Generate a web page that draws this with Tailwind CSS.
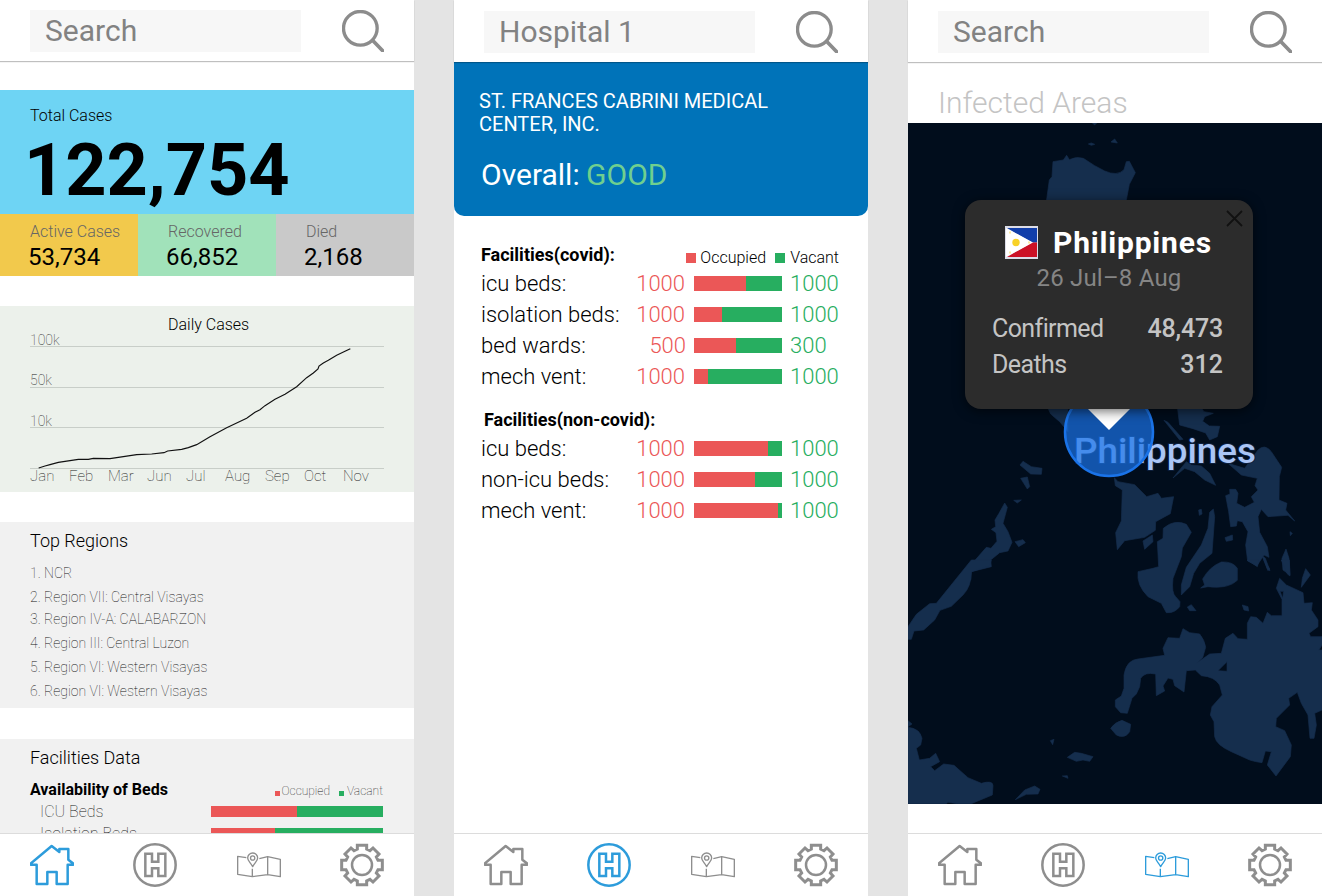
<!DOCTYPE html>
<html lang="en">
<head>
<meta charset="utf-8">
<title>Covid Tracker</title>
<script src="https://cdn.jsdelivr.net/npm/@tailwindcss/browser@4"></script>
</head>
<body class="bg-[#e4e4e4] font-['Roboto',sans-serif] text-black">
<svg class="hidden">
  <symbol id="search" viewBox="0 0 126 126"><g fill="none" stroke="currentColor" stroke-width="10"><circle cx="55" cy="55" r="50.5"/><path d="M93 92 122 122" stroke-width="11" stroke-linecap="round"/></g></symbol>
  <symbol id="home" viewBox="90 24 132 132"><path d="M155 33 92 86V89H110V147H142V111H170V147H203V89H220V86L205 74V42H178V51Z" fill="none" stroke="currentColor" stroke-width="7.5" stroke-linejoin="round"/></symbol>
  <symbol id="hospital" viewBox="399 24 132 132"><g fill="none" stroke="currentColor" stroke-width="7.5"><circle cx="465" cy="90" r="62"/><path d="M436 56H456V80H475V56H496V123H475V100H456V123H436Z"/></g></symbol>
  <symbol id="map" viewBox="80 24 132 132"><g fill="none" stroke="currentColor" stroke-width="4" stroke-linejoin="round"><path d="M108 68 82 64V118L126 125 172 119 210 125V73L172 65 147 71M126 101V125M172 65V119"/><path d="M127 95C121 83 112 78 112 69A15 15 0 0 1 142 69C142 78 133 83 127 95Z"/><circle cx="127" cy="69" r="6.5"/></g></symbol>
  <symbol id="gear" viewBox="-66 -66 132 132"><g fill="none" stroke="currentColor" stroke-width="9"><circle r="30" stroke-width="7.5"/><path d="M-14-59H14V-48L24-43 33-51 51-33 43-24 48-14H61V14H48L43 24 51 33 33 51 24 43 14 48V59H-14V48L-24 43-33 51-51 33-43 24-48 14H-61V-14H-48L-43-24-51-33-33-51-24-43-14-48Z"/></g></symbol>
</svg>
<div class="flex h-[896px] w-[1322px] gap-10 overflow-hidden">

  <!-- Home -->
  <section class="flex h-full w-[414px] flex-col bg-white">
    <header class="flex h-[61px] shrink-0 justify-between px-[30px] pt-[10px] shadow-[0_1px_1px_rgba(0,0,0,0.25)]">
      <div class="h-[42px] w-[271px] bg-[#f7f7f7] pt-[3px] pl-[15px] text-[30px] leading-[35px] text-[#828282]">Search</div>
      <svg class="size-[42px] text-[#8c8c8c]"><use href="#search"/></svg>
    </header>
    <main class="min-h-0 flex-1 overflow-hidden pt-[29px]">
      <div class="h-[124px] bg-[#6ed4f4] pt-4 pl-[30px]">
        <p class="text-base leading-[19px] font-light">Total Cases</p>
        <p class="-ml-[6px] pt-[4px] text-[72px] leading-[84px] font-bold">122,754</p>
      </div>
      <div class="grid h-[62px] grid-cols-3">
        <div class="bg-[#f2c94c] pt-2 pl-[30px]"><p class="text-base leading-[19px] font-light text-[#666]">Active Cases</p><p class="-ml-[2px] pt-[2px] text-2xl leading-[28px]">53,734</p></div>
        <div class="bg-[#a1e2ba] pt-2 pl-[30px]"><p class="text-base leading-[19px] font-light text-[#666]">Recovered</p><p class="-ml-[2px] pt-[2px] text-2xl leading-[28px]">66,852</p></div>
        <div class="bg-[#c9c9c9] pt-2 pl-[30px]"><p class="text-base leading-[19px] font-light text-[#666]">Died</p><p class="-ml-[2px] pt-[2px] text-2xl leading-[28px]">2,168</p></div>
      </div>
      <svg class="mt-[30px] block bg-[#ecf1eb]" width="414" height="186" viewBox="0 0 414 186">
        <path d="M30 40.5H384M30 81.5H384M30 121.5H384M30 162.5H384" stroke="#c8cec8"/>
        <text x="168" y="24" class="text-base font-light">Daily Cases</text>
        <g class="text-sm font-thin" fill="#222"><text x="30" y="39">100k</text><text x="30" y="79">50k</text><text x="30" y="120">10k</text></g>
        <g class="text-[15px] font-thin" fill="#222"><text x="30" y="175">Jan</text><text x="69" y="175">Feb</text><text x="108" y="175">Mar</text><text x="147" y="175">Jun</text><text x="186" y="175">Jul</text><text x="225" y="175">Aug</text><text x="265" y="175">Sep</text><text x="304" y="175">Oct</text><text x="343" y="175">Nov</text></g>
        <path transform="translate(0 -16) scale(.33333)" d="M116 534 135 528 150 524 175 517 210 512 235 508 265 508 280 505 330 506 370 500 410 494 455 492 492 488 503 483 545 478 565 473 590 464 630 440 680 413 740 385 765 367 780 359 795 347 825 328 855 313 890 290 920 263 940 249 954 237 957 228 970 219 985 211 1010 196 1035 184 1051 176" fill="none" stroke="#111" stroke-width="3.5"/>
      </svg>
      <div class="mt-[30px] h-[186px] bg-[#f1f1f1] pt-[8px] pl-[30px]">
        <h2 class="text-lg leading-[21px] font-light">Top Regions</h2>
        <ol class="pt-[10px] text-sm leading-6 font-thin text-[#111]">
          <li>1. NCR</li><li>2. Region VII: Central Visayas</li><li class="-mt-[2px]">3. Region IV-A: CALABARZON</li><li>4. Region III: Central Luzon</li><li>5. Region VI: Western Visayas</li><li>6. Region VI: Western Visayas</li>
        </ol>
      </div>
      <div class="mt-[31px] h-[186px] bg-[#f1f1f1] px-[30px] pt-[8px]">
        <h2 class="text-lg leading-[21px] font-light">Facilities Data</h2>
        <div class="flex items-end justify-between pt-[12px] pr-[1px]">
          <h3 class="text-base leading-[19px] font-bold">Availability of Beds</h3>
          <div class="flex text-xs leading-[15px] font-thin text-[#111]"><i class="mt-[7px] mr-[2px] size-[5px] bg-[#eb5757]"></i>Occupied<i class="mt-[7px] mr-[3px] ml-[9px] size-[5px] bg-[#27ae60]"></i>Vacant</div>
        </div>
        <div class="flex h-[22px] justify-between pt-[3px] pr-[1px] pl-[10px]"><span class="text-base leading-[19px] font-thin text-[#111]">ICU Beds</span><div class="mt-[4px] flex h-[11px] w-[172px] bg-[#27ae60]"><div class="w-1/2 bg-[#eb5757]"></div></div></div>
        <div class="flex h-[22px] justify-between pt-[3px] pr-[1px] pl-[10px]"><span class="text-base leading-[19px] font-thin text-[#111]">Isolation Beds</span><div class="mt-[4px] flex h-[11px] w-[172px] bg-[#27ae60]"><div class="w-[64px] bg-[#eb5757]"></div></div></div>
      </div>
    </main>
    <nav class="flex h-[63px] shrink-0 justify-between border-t border-[#dcdcdc] bg-white px-[30px] pt-[9px] text-[#8e8e8e]">
      <svg class="size-11 text-[#2d9cdb]"><use href="#home"/></svg><svg class="size-11"><use href="#hospital"/></svg><svg class="size-11"><use href="#map"/></svg><svg class="size-11"><use href="#gear"/></svg>
    </nav>
  </section>

  <!-- Hospital -->
  <section class="flex h-full w-[414px] flex-col bg-white">
    <header class="relative z-10 flex h-[62px] shrink-0 justify-between bg-white px-[30px] pt-[11px] shadow-[0_1px_1px_rgba(0,0,0,0.25)]">
      <div class="h-[42px] w-[271px] bg-[#f7f7f7] pt-[3px] pl-[15px] text-[30px] leading-[35px] text-[#828282]">Hospital 1</div>
      <svg class="size-[42px] text-[#8c8c8c]"><use href="#search"/></svg>
    </header>
    <main class="min-h-0 flex-1">
      <div class="h-[154px] rounded-b-[10px] bg-[#0073b9] pt-[28px] pl-[25px] text-white">
        <h1 class="w-[320px] text-xl leading-[23px]">ST. FRANCES CABRINI MEDICAL CENTER, INC.</h1>
        <p class="pt-[21px] pl-[2px] text-[30px] leading-[35px]">Overall: <span class="-ml-px text-[#6fcf8f]">GOOD</span></p>
      </div>
      <div class="pt-[28px] pr-[29px] pl-[27px]">
        <div class="flex justify-between">
          <h2 class="text-lg leading-[21px] font-bold">Facilities(covid):</h2>
          <div class="flex pt-[4px] text-base leading-[19px] font-light"><i class="mt-[5px] mr-[4px] size-[10px] bg-[#eb5757]"></i>Occupied<i class="mt-[5px] mr-[5px] ml-[9px] size-[10px] bg-[#27ae60]"></i>Vacant</div>
        </div>
        <div class="grid auto-rows-[31px] grid-cols-[150px_54px_9px_88px_8px_49px] pt-[4px] text-[22px] leading-[26px] font-light">
          <span>icu beds:</span><span class="text-right text-[#eb5757]">1000</span><i></i><div class="mt-[5px] flex h-[15px] bg-[#27ae60]"><div class="w-[52px] bg-[#eb5757]"></div></div><i></i><span class="text-[#27ae60]">1000</span>
          <span>isolation beds:</span><span class="text-right text-[#eb5757]">1000</span><i></i><div class="mt-[5px] flex h-[15px] bg-[#27ae60]"><div class="w-[28px] bg-[#eb5757]"></div></div><i></i><span class="text-[#27ae60]">1000</span>
          <span>bed wards:</span><span class="-mr-px text-right text-[#eb5757]">500</span><i></i><div class="mt-[5px] flex h-[15px] bg-[#27ae60]"><div class="w-[42px] bg-[#eb5757]"></div></div><i></i><span class="text-[#27ae60]">300</span>
          <span>mech vent:</span><span class="text-right text-[#eb5757]">1000</span><i></i><div class="mt-[5px] flex h-[15px] bg-[#27ae60]"><div class="w-[14px] bg-[#eb5757]"></div></div><i></i><span class="text-[#27ae60]">1000</span>
        </div>
        <h2 class="pt-[14px] pl-[3px] text-lg leading-[21px] font-bold">Facilities(non-covid):</h2>
        <div class="grid auto-rows-[31px] grid-cols-[150px_54px_9px_88px_8px_49px] pt-[6px] text-[22px] leading-[26px] font-light">
          <span>icu beds:</span><span class="text-right text-[#eb5757]">1000</span><i></i><div class="mt-[5px] flex h-[15px] bg-[#27ae60]"><div class="w-[74px] bg-[#eb5757]"></div></div><i></i><span class="text-[#27ae60]">1000</span>
          <span>non-icu beds:</span><span class="text-right text-[#eb5757]">1000</span><i></i><div class="mt-[5px] flex h-[15px] bg-[#27ae60]"><div class="w-[61px] bg-[#eb5757]"></div></div><i></i><span class="text-[#27ae60]">1000</span>
          <span>mech vent:</span><span class="text-right text-[#eb5757]">1000</span><i></i><div class="mt-[5px] flex h-[15px] bg-[#27ae60]"><div class="w-[84px] bg-[#eb5757]"></div></div><i></i><span class="text-[#27ae60]">1000</span>
        </div>
      </div>
    </main>
    <nav class="flex h-[63px] shrink-0 justify-between border-t border-[#dcdcdc] bg-white px-[30px] pt-[9px] text-[#8e8e8e]">
      <svg class="size-11"><use href="#home"/></svg><svg class="size-11 text-[#2d9cdb]"><use href="#hospital"/></svg><svg class="size-11"><use href="#map"/></svg><svg class="size-11"><use href="#gear"/></svg>
    </nav>
  </section>

  <!-- Map -->
  <section class="flex h-full w-[414px] flex-col bg-white">
    <header class="flex h-[62px] shrink-0 justify-between px-[30px] pt-[11px] shadow-[0_1px_1px_rgba(0,0,0,0.25)]">
      <div class="h-[42px] w-[271px] bg-[#f7f7f7] pt-[3px] pl-[15px] text-[30px] leading-[35px] text-[#828282]">Search</div>
      <svg class="size-[42px] text-[#8c8c8c]"><use href="#search"/></svg>
    </header>
    <main class="min-h-0 flex-1">
      <h1 class="h-[61px] pt-[23px] pl-[30px] text-[30px] leading-[35px] font-light text-[#c4c4c4]">Infected Areas</h1>
      <div class="relative h-[681px] w-[414px] overflow-hidden bg-[#010d1c]">
        <svg class="block" width="414" height="681" viewBox="0 0 414 681">
          <g fill="#152e4d" stroke="#152e4d" stroke-width="2" stroke-linejoin="round">
            <g transform="translate(0 -3) scale(.33333)">
              <path d="M553 9H566L560 15ZM541 72 550 69 560 73 550 76ZM609 66 620 57 628 69ZM413 260 424 180 432 170 435 125 466 120 476 106 484 119Q505 108 526 115L560 137 590 153Q628 170 648 149L655 125 664 124 682 158 664 193 655 240 655 260Z"/>
            </g>
            <g transform="translate(0 217) scale(.33333)">
              <path d="M418 200H480V275L455 245 428 222ZM808 200H878L888 215 916 220 890 230 884 244 904 258 935 259 928 290 905 300 893 279 855 266 815 255ZM768 241 780 247 825 298 815 300ZM795 414 835 365 850 375 880 378 905 400 923 436 890 420 860 395 830 385ZM960 370 1010 385 1050 330Q1070 310 1090 335L1121 382 1114 410 1113 480 1137 490 1133 510 1160 543 1140 526 1080 530 1060 508 1050 530 1055 577 1078 620 1083 652 1068 645 1047 677 1019 663 1013 615 1020 575 1003 545 988 542 985 558 968 560 962 515 953 467 966 462 965 448 983 448 990 460 986 490 1010 502 1039 487 1030 470 1050 450 1041 437 1048 415 1000 405Z"/>
              <path d="M336 375 345 364 370 380 402 385 400 403 368 402ZM338 415 358 411 365 440 358 447ZM317 481 340 480 328 489ZM290 489 298 502 285 550 300 575 312 607 300 633 275 638 248 660 250 680 190 695 188 720H145L180 685 235 622 249 625 267 604 264 578 250 568 263 560 261 540 273 520ZM321 605 345 599 352 608 332 620ZM619 413 630 425 680 434 716 470 750 460 760 475 797 470 787 521 743 545 742 571 710 592 650 602 628 629 623 578 640 543 643 450 622 437ZM733 585 735 605 710 628 705 603ZM872 510 880 508 882 522 874 526ZM951 593 973 585 974 600 955 604ZM1146 575 1153 580 1147 587ZM1062 647 1072 655 1086 692 1078 687ZM1134 627 1143 655 1146 705 1125 690 1122 655Z"/>
              <path d="M766 565Q800 536 835 553L850 577 823 624 820 650 795 715Q790 760 803 770L816 785 815 800Q800 820 775 818L760 790 720 770Q685 735 690 695L735 685 752 680 748 605 765 595ZM916 507 920 530 912 640 875 670 857 700 845 740 820 765 820 735 835 682 880 615 900 565 905 517ZM878 744 890 735 884 717Q905 680 940 666 975 664 988 685V721Q960 748 900 740Z"/>
            </g>
            <g transform="translate(0 437) scale(.33333)">
              <path d="M190 0H250L245 17 190 35Q190 80 165 105L130 139 96 151 80 180 47 210 18 213 10 238H0V200L25 163 65 131 85 130ZM0 482 12 492 0 500ZM0 502Q35 505 42 535L38 555 25 565 34 600 65 595 83 580 95 605 68 620 80 632 107 612 138 616 180 653 220 670Q255 660 255 677L253 705 190 731H148L120 727 115 731H0ZM427 542 438 538 434 554ZM478 592 500 577 520 580 555 590 545 604 525 600 505 604ZM463 648 478 647 480 655ZM322 719 350 690 380 678 396 688 390 702 355 703ZM608 505Q620 487 642 481L668 493 665 515Q650 538 625 525Z"/>
              <path d="M838 141 850 134 864 152 845 152ZM1003 135 1020 140 1022 153 1008 150ZM1017 0H1053L1048 20ZM1068 0 1085 27 1080 32ZM1120 0H1144L1146 48 1138 42ZM1193 26 1207 45 1180 82 1183 55Z"/>
              <path fill-rule="evenodd" d="M622 420 640 408 648 385V345Q655 300 690 297L770 286 765 265 780 233 815 235 825 206 845 218 875 222Q890 240 893 262L884 293 865 310 905 282 940 280 952 235 975 220 990 236 1018 238 1018 190 1028 170 1045 172 1065 190 1078 157 1090 167H1122V118L1105 85 1115 55 1135 75 1185 98 1188 130 1213 128 1210 150 1230 180V200L1203 220 1208 230 1242 230V255L1233 270H1242V450L1220 460 1225 495 1218 535H1206L1200 465 1180 430 1168 397 1142 415 1145 435 1105 475 1103 500 1130 512 1150 555 1147 590 1104 648 1078 615 1090 575 1072 573 1062 608Q1040 605 1025 600L970 575Q925 555 920 530L918 485 907 465 912 440 943 405 935 375Q920 350 880 347L862 330 835 332 828 396 800 377 795 358 780 354 765 378 770 393 745 407 743 342Q710 335 698 355L695 380 685 402 672 415 658 460 638 458 622 440ZM930 332 957 305V334ZM1116 94 1127 94 1124 115Z"/>
            </g>
          </g>
          <text x="166" y="340" textLength="182" lengthAdjust="spacingAndGlyphs" class="text-[35px] font-medium" fill="#aac5f5" stroke="#0c1e3b" stroke-width="2" paint-order="stroke">Philippines</text>
          <circle cx="201" cy="309" r="44" fill="#1a73e8" fill-opacity=".7" stroke="#1a73e8" stroke-width="2.5"/>
          <path d="M180 286H222L201 307Z" fill="#fff"/>
        </svg>
        <div class="absolute top-[77px] left-[57px] h-[209px] w-[288px] rounded-2xl bg-[#2c2c2c] px-[28px] pt-[24px] shadow-[0_2px_12px_rgba(0,0,0,0.6)]">
          <svg class="absolute top-[10px] right-[10px] size-[17px]" viewBox="0 0 17 17"><path d="M1 1 16 16M16 1 1 16" stroke="#111" stroke-width="1.8"/></svg>
          <div class="flex h-[37px] pl-[12px]">
            <svg class="mt-[2px] size-[33px]" viewBox="0 0 33 33"><path fill="#dcdde8" d="M0 0H33V33H0Z"/><path fill="#113eaa" d="M2 2H32V16.500H27Z"/><path fill="#cc1126" d="M27 16.500H32V31H2Z"/><path fill="#fff" d="M1 2 28 16.500 1 31Z"/><circle cx="11" cy="16.500" r="3.700" fill="#f8d227"/><path d="M4 5.500h2v2H4ZM4 25.500h2v2H4ZM23 15.500h2v2h-2Z" fill="#fce9a0"/></svg>
            <h2 class="pl-[15px] pt-px text-[30px] leading-[36px] font-bold tracking-[0.8px] text-white">Philippines</h2>
          </div>
          <p class="text-center text-2xl leading-[34px] tracking-[0.2px] text-[#858585]">26 Jul–8 Aug</p>
          <div class="flex justify-between pt-[16px] pr-[2px] text-[25px] leading-[36px] text-[#c4c4c4]"><span class="-ml-px tracking-[-0.6px]">Confirmed</span><b class="font-medium tracking-[-0.2px]">48,473</b></div>
          <div class="flex justify-between pr-[2px] text-[25px] leading-[36px] text-[#c4c4c4]"><span class="-ml-px tracking-[-0.6px]">Deaths</span><b class="font-medium">312</b></div>
        </div>
      </div>
    </main>
    <nav class="flex h-[63px] shrink-0 justify-between border-t border-[#dcdcdc] bg-white px-[30px] pt-[9px] text-[#8e8e8e]">
      <svg class="size-11"><use href="#home"/></svg><svg class="size-11"><use href="#hospital"/></svg><svg class="size-11 text-[#2d9cdb]"><use href="#map"/></svg><svg class="size-11"><use href="#gear"/></svg>
    </nav>
  </section>
</div>
</body>
</html>
